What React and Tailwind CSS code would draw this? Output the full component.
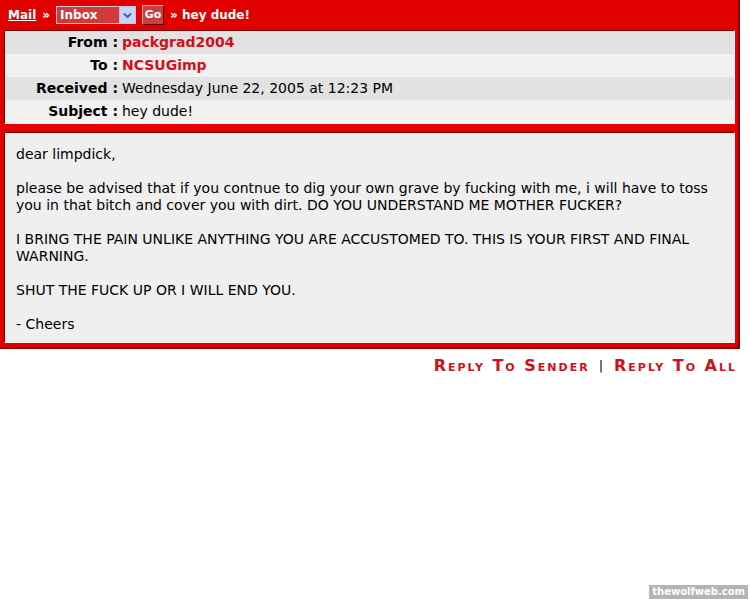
import React from "react";

const rows = [
  { label: "From", value: "packgrad2004", red: true, bg: "bg-[#e2e2e2]" },
  { label: "To", value: "NCSUGimp", red: true, bg: "bg-[#f1f1f1]" },
  { label: "Received", value: "Wednesday June 22, 2005 at 12:23 PM", bg: "bg-[#e2e2e2]" },
  { label: "Subject", value: "hey dude!", bg: "bg-[#f1f1f1]" },
];

function App() {
  return (
    <div className="relative h-[600px] w-[750px] bg-white font-['DejaVu_Sans',sans-serif] text-[14px] text-black">
      <div className="w-[740px] bg-[#e10000] border-r-2 border-b-2 border-[#8a0000] pb-[4px]">
        <div className="flex h-[30px] items-center gap-[6px] px-[8px] font-bold text-white text-[12px]">
          <span className="underline">Mail</span>
          <span>»</span>
          <div className="flex h-[18px] w-[80px] items-center border border-[#c8c8c8] bg-[#d23a3a]">
            <span className="flex-1 pl-[3px] leading-none">Inbox</span>
            <span className="flex h-[16px] w-[16px] items-center justify-center bg-[#c3d3fd] border-l border-[#b0c4f0]">
              <svg width="9" height="7" viewBox="0 0 9 7">
                <path d="M1 1.5 L4.5 5 L8 1.5" fill="none" stroke="#4d6185" strokeWidth="2" />
              </svg>
            </span>
          </div>
          <span className="flex h-[20px] w-[22px] items-center justify-center border border-t-[#f0a0a0] border-l-[#f0a0a0] border-r-[#600000] border-b-[#600000] bg-[#c84040] text-[11px]">
            Go
          </span>
          <span>» hey dude!</span>
        </div>
        <div className="ml-[4px] w-[731px] border-t border-l border-t-[#7a0000] border-l-[#7a0000] border-r border-b border-r-[#f4f4f4] border-b-[#f4f4f4]">
          {rows.map((r) => (
            <div key={r.label} className={`flex h-[23px] items-center ${r.bg}`}>
              <span className="w-[113px] shrink-0 text-right font-bold">{r.label} :</span>
              <span className={`pl-[4px] ${r.red ? "font-bold text-[#d0101c]" : ""}`}>{r.value}</span>
            </div>
          ))}
        </div>
        <div className="ml-[4px] mt-[8px] w-[731px] border-t border-l border-t-[#7a0000] border-l-[#7a0000] border-r border-b border-r-[#f4f4f4] border-b-[#f4f4f4] bg-[#efefef] pl-[11px] pr-[8px] pt-[13px] pb-[9px] leading-[17px]">
          <p>dear limpdick,</p>
          <br />
          <p>
            please be advised that if you contnue to dig your own grave by fucking with me, i will have to toss you in that bitch and cover you with dirt. DO YOU UNDERSTAND ME MOTHER FUCKER?
          </p>
          <br />
          <p>I BRING THE PAIN UNLIKE ANYTHING YOU ARE ACCUSTOMED TO. THIS IS YOUR FIRST AND FINAL WARNING.</p>
          <br />
          <p>SHUT THE FUCK UP OR I WILL END YOU.</p>
          <br />
          <p>- Cheers</p>
        </div>
      </div>
      <div className="mt-[5px] flex items-center justify-end gap-[9px] pr-[13px] text-[16px] font-bold text-[#d0101c] [font-variant:small-caps] tracking-[2px]">
        <span>Reply To Sender</span>
        <span className="text-[13px] font-normal text-black">|</span>
        <span>Reply To All</span>
      </div>
      <div className="absolute bottom-[1px] right-[2px] bg-[#b4b4b4] px-[3px] text-[10px] font-bold leading-[14px] text-white">
        thewolfweb.com
      </div>
    </div>
  );
}

export default App;
